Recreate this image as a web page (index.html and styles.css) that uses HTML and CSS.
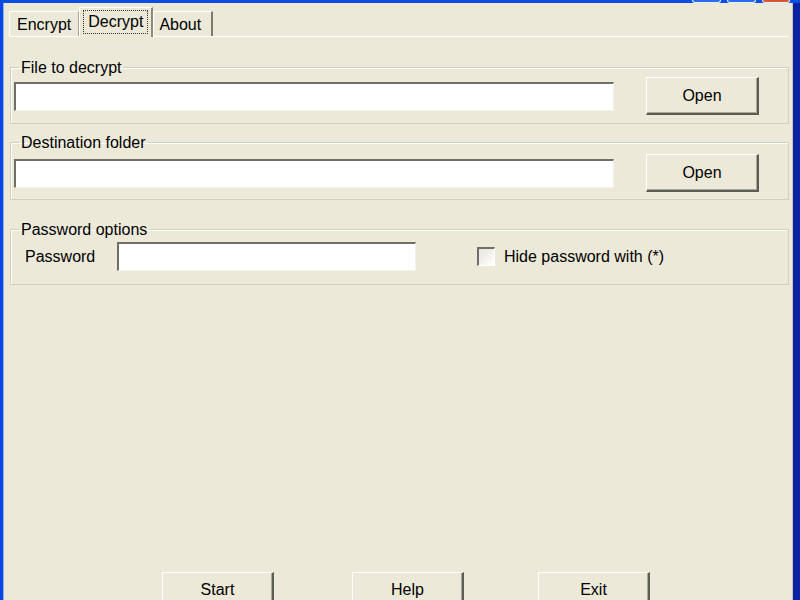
FILE: index.html
```html
<!DOCTYPE html>
<html lang="en">
<head>
  <meta charset="UTF-8">
  <meta name="viewport" content="width=device-width, initial-scale=1.0">
  <title>Decrypt</title>
  <link rel="stylesheet" href="styles.css">
</head>
<body>
  <div class="frame">
    <div class="titlebar">
      <span class="cap cap-min"></span>
      <span class="cap cap-max"></span>
      <span class="cap cap-close"></span>
    </div>
    <div class="client">
      <div class="tabs">
        <div class="tab">Encrypt</div>
        <div class="tab tab-active"><span class="focus">Decrypt</span></div>
        <div class="tab tab-last">About</div>
      </div>
      <div class="panel">
        <fieldset class="group group-file">
          <legend>File to decrypt</legend>
          <div class="row">
            <input class="field field-wide" type="text">
            <button class="btn btn-open">Open</button>
          </div>
        </fieldset>

        <fieldset class="group group-dest">
          <legend>Destination folder</legend>
          <div class="row">
            <input class="field field-wide" type="text">
            <button class="btn btn-open">Open</button>
          </div>
        </fieldset>

        <fieldset class="group group-pass">
          <legend>Password options</legend>
          <div class="row row-pass">
            <label class="pass-label">Password</label>
            <input class="field field-pass" type="text">
            <label class="check">
              <span class="check-box"></span>
              Hide password with (*)
            </label>
          </div>
        </fieldset>

        <div class="actions">
          <button class="btn btn-action">Start</button>
          <button class="btn btn-action btn-help">Help</button>
          <button class="btn btn-action btn-exit">Exit</button>
        </div>
      </div>
    </div>
  </div>
</body>
</html>
```

FILE: styles.css
```css
* {
  box-sizing: border-box;
}

body {
  margin: 0;
  background-color: #ece9d8;
  font-family: "Liberation Sans", Arial, sans-serif;
  font-size: 16px;
  color: #000;
  overflow: hidden;
}

.frame {
  height: 600px;
  display: flex;
  flex-direction: column;
  border-left: 3px solid #0a47e0;
  border-right: 7px solid #0b22a4;
  background-color: #ece9d8;
  box-shadow: inset 1px 0 0 #8fb0f2, inset -1px 0 0 #c8c5b4;
}

.titlebar {
  height: 4px;
  background-color: #0a4fe2;
  display: flex;
  justify-content: flex-end;
  margin-right: -7px;
  margin-left: -3px;
  padding-right: 10px;
}

.cap {
  height: 3px;
  width: 29px;
  margin-left: 6px;
  background-color: #2a6cf0;
  border: 1px solid #e8eefc;
  border-top: none;
  border-radius: 0 0 3px 3px;
}

.cap-close {
  width: 28px;
  background-color: #d8553a;
}

.client {
  padding: 4px 4px 0 7px;
}

.tabs {
  display: flex;
  align-items: flex-end;
  height: 29px;
  margin-left: -1px;
}

.tab {
  height: 25px;
  padding: 4px 7px 0 7px;
  border-left: 1px solid #fff;
  border-top: 1px solid #fff;
  border-right: 1px solid #a8a595;
  line-height: 18px;
}

.tab-active {
  height: 30px;
  margin-bottom: -1px;
  padding: 2px 3px 0 3px;
  background-color: #ece9d8;
  border-right: 2px solid #8c8a7c;
}

.focus {
  display: block;
  padding: 2px 4px 2px 4px;
  border: 1px dotted #333;
}

.tab-last {
  padding: 4px 10px 0 5px;
  border-right: 2px solid #7d7b6f;
}

.panel {
  border-top: 1px solid #fff;
}

.group {
  margin: 0;
  border: 1px solid #d0d0bf;
  box-shadow: inset 1px 1px 0 #fff;
  padding: 0 29px 8px 3px;
}

.group legend {
  margin-left: 5px;
  padding: 1px 2px 0 2px;
  line-height: 18px;
}

.group-file {
  margin-top: 21px;
}

.group-dest {
  margin-top: 9px;
  padding-top: 2px;
  padding-bottom: 7px;
}

.group-pass {
  margin-top: 20px;
  padding-top: 3px;
  padding-bottom: 13px;
}

.row {
  display: flex;
  align-items: center;
  gap: 32px;
}

.field {
  height: 29px;
  background-color: #fff;
  border-top: 2px solid #6f6f6a;
  border-left: 2px solid #6f6f6a;
  border-right: 1px solid #f2f1ea;
  border-bottom: 1px solid #f2f1ea;
  outline: none;
  font: inherit;
}

.field-wide {
  flex: 1;
}

.btn {
  font: inherit;
  color: #000;
  background-color: #ece9d8;
  border-top: 1px solid #fff;
  border-left: 1px solid #fff;
  border-right: 2px solid #5e5d55;
  border-bottom: 2px solid #5e5d55;
  box-shadow: inset -1px -1px 0 #aca899;
  padding: 0;
}

.btn-open {
  width: 113px;
  height: 38px;
}

.row-pass {
  gap: 0;
}

.pass-label {
  margin-left: 11px;
  width: 92px;
}

.field-pass {
  width: 299px;
}

.check {
  display: flex;
  align-items: center;
  margin-left: 61px;
  gap: 9px;
}

.check-box {
  width: 18px;
  height: 19px;
  background: linear-gradient(135deg, #e6e4dc, #fff);
  border-top: 2px solid #6f6f6a;
  border-left: 2px solid #6f6f6a;
  border-right: 1px solid #fff;
  border-bottom: 1px solid #fff;
}

.actions {
  display: flex;
  margin-top: 287px;
  padding-left: 152px;
}

.btn-action {
  width: 112px;
  height: 36px;
}

.btn-help {
  margin-left: 78px;
}

.btn-exit {
  margin-left: 74px;
}
```
